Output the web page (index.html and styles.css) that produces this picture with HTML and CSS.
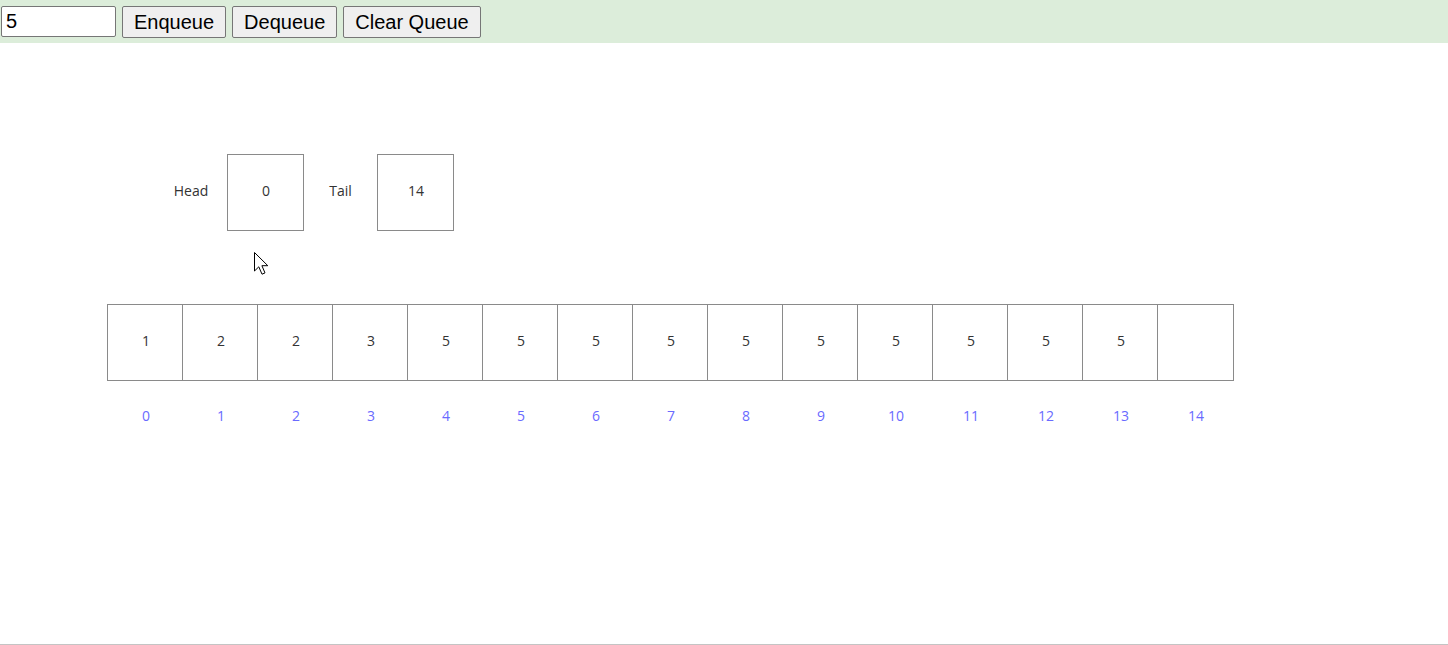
FILE: index.html
```html
<!DOCTYPE html>
<html>
<head>
<meta charset="utf-8">
<title>Queue (Array Implementation)</title>
<link rel="stylesheet" href="styles.css">
</head>
<body>
<div class="toolbar">
  <input class="field" type="text" value="5">
  <button class="btn">Enqueue</button>
  <button class="btn">Dequeue</button>
  <button class="btn">Clear Queue</button>
</div>
<div class="stage">
  <div class="pointers">
    <span class="plabel head-label">Head</span>
    <div class="pbox">0</div>
    <span class="plabel tail-label">Tail</span>
    <div class="pbox">14</div>
  </div>
  <div class="array">
    <div class="cell">1</div>
    <div class="cell">2</div>
    <div class="cell">2</div>
    <div class="cell">3</div>
    <div class="cell">5</div>
    <div class="cell">5</div>
    <div class="cell">5</div>
    <div class="cell">5</div>
    <div class="cell">5</div>
    <div class="cell">5</div>
    <div class="cell">5</div>
    <div class="cell">5</div>
    <div class="cell">5</div>
    <div class="cell">5</div>
    <div class="cell"></div>
  </div>
  <div class="indices">
    <span class="idx">0</span>
    <span class="idx">1</span>
    <span class="idx">2</span>
    <span class="idx">3</span>
    <span class="idx">4</span>
    <span class="idx">5</span>
    <span class="idx">6</span>
    <span class="idx">7</span>
    <span class="idx">8</span>
    <span class="idx">9</span>
    <span class="idx">10</span>
    <span class="idx">11</span>
    <span class="idx">12</span>
    <span class="idx">13</span>
    <span class="idx">14</span>
  </div>
  <svg class="cursor" width="20" height="28" viewBox="0 0 20 28">
    <path d="M1.5 1.5 L1.5 20 L5.8 15.8 L9 23.2 L12 21.9 L8.9 14.7 L14.8 14.7 Z" fill="#fff" stroke="#000" stroke-width="1" stroke-linejoin="miter"/>
  </svg>
</div>
</body>
</html>
```
FILE: styles.css
```css
html, body {
  margin: 0;
  padding: 0;
  background: #ffffff;
}

body {
  font-family: "Liberation Sans", Arial, sans-serif;
  width: 1448px;
  height: 645px;
  overflow: hidden;
}

.toolbar {
  height: 43px;
  box-sizing: border-box;
  background: #dcedda;
  display: flex;
  align-items: flex-start;
  gap: 6px;
  padding: 6px 0 0 1px;
}

.field {
  width: 115px;
  height: 31px;
  box-sizing: border-box;
  margin: 0;
  padding: 0 4px;
  font-family: "Liberation Sans", Arial, sans-serif;
  font-size: 20px;
  color: #000;
  background: #fff;
  border: 1px solid #767676;
  border-radius: 2px;
}

.btn {
  height: 32px;
  box-sizing: border-box;
  margin: 0;
  padding: 0 11px;
  font-family: "Liberation Sans", Arial, sans-serif;
  font-size: 20px;
  color: #000;
  background: #efefef;
  border: 1px solid #767676;
  border-radius: 2px;
}

.stage {
  position: relative;
  height: 602px;
  box-sizing: border-box;
  border-bottom: 1px solid #c4c4c4;
  font-family: "Open Sans", "DejaVu Sans", sans-serif;
  font-size: 14px;
  color: #333;
}

.pointers {
  display: flex;
  align-items: center;
  padding: 111px 0 0 160px;
}

.plabel {
  text-align: center;
  color: #333;
  padding-bottom: 4px;
}

.head-label {
  width: 62px;
  margin-right: 5px;
}

.tail-label {
  width: 73px;
}

.pbox {
  width: 77px;
  height: 77px;
  box-sizing: border-box;
  border: 1px solid #8a8a8a;
  display: flex;
  align-items: center;
  justify-content: center;
  padding: 0 0 4px 1px;
}

.array {
  display: flex;
  margin: 73px 0 0 107px;
}

.cell {
  width: 75px;
  height: 77px;
  box-sizing: border-box;
  border: 1px solid #8a8a8a;
  border-right: none;
  display: flex;
  align-items: center;
  justify-content: center;
  padding: 0 0 4px 2px;
}

.cell:last-child {
  width: 77px;
  border-right: 1px solid #8a8a8a;
}

.indices {
  display: flex;
  margin: 25px 0 0 108px;
}

.idx {
  width: 75px;
  box-sizing: border-box;
  line-height: 20px;
  text-align: center;
  color: #6a6aff;
  padding-left: 1px;
}

.cursor {
  position: absolute;
  left: 253px;
  top: 208px;
}
```
